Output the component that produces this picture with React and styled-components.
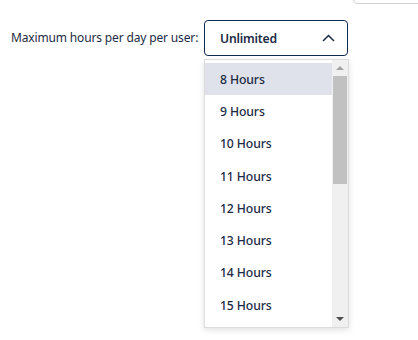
import React from "react";
import styled, { createGlobalStyle } from "styled-components";

const Global = createGlobalStyle`
  html, body { margin: 0; padding: 0; background: #fff; }
  body { font-family: "Noto Sans", "Open Sans", sans-serif; color: #1c2b45; }
  * { box-sizing: border-box; }
`;

const Page = styled.div`
  width: 418px;
  height: 340px;
  overflow: hidden;
  display: flex;
  flex-direction: column;
`;

const TopStrip = styled.div`
  height: 5px;
  display: flex;
  justify-content: flex-end;
  overflow: visible;
`;

const TopBox = styled.div`
  width: 80px;
  height: 30px;
  margin-top: -26px;
  margin-right: -15px;
  border: 1px solid #cfd1da;
  border-radius: 4px;
  background: #fff;
`;

const Row = styled.div`
  display: flex;
  align-items: flex-start;
  padding: 15px 0 0 11px;
  gap: 5px;
`;

const Label = styled.label`
  flex: 0 0 188px;
  font-size: 12px;
  letter-spacing: -0.15px;
  line-height: 36px;
  color: #1c2b45;
  white-space: nowrap;
`;

const Field = styled.div`
  display: flex;
  flex-direction: column;
  gap: 3px;
  width: 144px;
`;

const SelectBox = styled.div`
  height: 36px;
  border: 1px solid #0f2a4f;
  border-radius: 4px;
  display: flex;
  align-items: center;
  justify-content: space-between;
  padding: 0 12px 0 15px;
  font-size: 12.2px;
  font-weight: 600;
  letter-spacing: -0.2px;
  color: #1c2b45;
`;

const Menu = styled.div`
  width: 145px;
  height: 269px;
  border: 1px solid #dcdcdc;
  background: #fff;
  box-shadow: 0 2px 6px rgba(0, 0, 0, 0.12);
  display: flex;
  overflow: hidden;
`;

const List = styled.ul`
  flex: 1;
  list-style: none;
  margin: 0;
  padding: 3px 0 0;
  overflow: hidden;
`;

const Item = styled.li`
  height: 32.3px;
  display: flex;
  align-items: center;
  padding-left: 15px;
  font-size: 12.2px;
  font-weight: 500;
  letter-spacing: -0.1px;
  color: #1c2b45;
  background: ${(p) => (p.$active ? "#dfe2ea" : "transparent")};
`;

const ScrollBar = styled.div`
  width: 16px;
  background: #f0f0f0;
  display: flex;
  flex-direction: column;
  align-items: center;
`;

const ArrowBtn = styled.div`
  height: 16px;
  width: 16px;
  display: flex;
  align-items: center;
  justify-content: center;
`;

const Triangle = styled.span`
  width: 0;
  height: 0;
  border-left: 4px solid transparent;
  border-right: 4px solid transparent;
  ${(p) =>
    p.$up
      ? `border-bottom: 4px solid ${p.$color};`
      : `border-top: 4px solid ${p.$color};`}
`;

const Track = styled.div`
  flex: 1;
  width: 100%;
  padding: 0 1px;
`;

const Thumb = styled.div`
  height: 108px;
  background: #c1c1c1;
`;

const hours = [];
for (let h = 8; h <= 15; h++) hours.push(`${h} Hours`);

export default function App() {
  return (
    <>
      <Global />
      <Page>
        <TopStrip>
          <TopBox />
        </TopStrip>
        <Row>
          <Label>Maximum hours per day per user:</Label>
          <Field>
            <SelectBox>
              <span>Unlimited</span>
              <svg width="13" height="8" viewBox="0 0 13 8" fill="none">
                <path d="M1 7 L6.5 1.5 L12 7" stroke="#1c2b45" strokeWidth="1.5" />
              </svg>
            </SelectBox>
            <Menu>
              <List>
                {hours.map((h, i) => (
                  <Item key={h} $active={i === 0}>
                    {h}
                  </Item>
                ))}
              </List>
              <ScrollBar>
                <ArrowBtn>
                  <Triangle $up $color="#a3a3a3" />
                </ArrowBtn>
                <Track>
                  <Thumb />
                </Track>
                <ArrowBtn>
                  <Triangle $color="#505050" />
                </ArrowBtn>
              </ScrollBar>
            </Menu>
          </Field>
        </Row>
      </Page>
    </>
  );
}
